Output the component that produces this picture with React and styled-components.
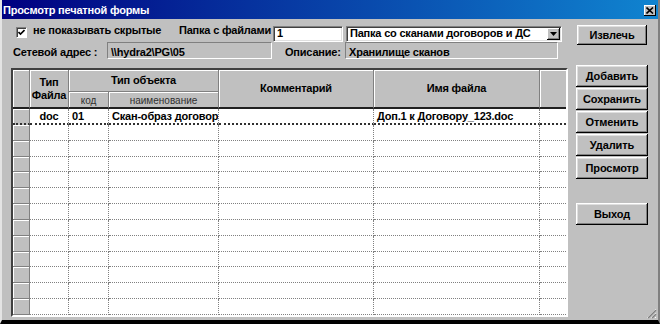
import React from "react";
import styled, { createGlobalStyle } from "styled-components";

const GlobalStyle = createGlobalStyle`
  html, body {
    margin: 0;
    padding: 0;
    background: #c0c0c0;
  }
  body {
    font-family: "Liberation Sans", Arial, sans-serif;
    font-size: 11px;
    font-weight: bold;
    letter-spacing: -0.2px;
    line-height: 13px;
    color: #000;
  }
`;

const Window = styled.div`
  position: relative;
  width: 660px;
  height: 324px;
  box-sizing: border-box;
  display: flex;
  flex-direction: column;
  overflow: hidden;
  background: #c0c0c0;
  border-left: 2px solid #e4e4e4;
  border-right: 2px solid #808080;
  border-bottom: 4px solid #000;
`;

const TitleBar = styled.div`
  flex: none;
  height: 19px;
  box-sizing: border-box;
  display: flex;
  align-items: center;
  justify-content: space-between;
  padding: 2px 2px 0 1px;
  background: linear-gradient(to right, #000080, #1084d0);
  color: #fff;
  font-size: 11px;
  font-weight: bold;
`;

const CloseButton = styled.div`
  width: 12px;
  height: 11px;
  display: flex;
  align-items: center;
  justify-content: center;
  background: #c0c0c0;
  box-shadow: inset -1px -1px #000, inset 1px 1px #fff;
`;

const Body = styled.div`
  flex: 1;
  display: flex;
  gap: 8px;
  padding-left: 9px;
`;

const LeftPane = styled.div`
  width: 557px;
  display: flex;
  flex-direction: column;
`;

const RightPane = styled.div`
  width: 72px;
  display: flex;
  flex-direction: column;
  padding-top: 6px;
`;

const FormRow = styled.div`
  display: flex;
  align-items: flex-start;
  height: ${(p) => p.$h}px;
  margin-top: ${(p) => p.$top || 0}px;
`;

const CheckArea = styled.label`
  width: 168px;
  box-sizing: border-box;
  padding-left: 5px;
  display: flex;
  align-items: flex-start;
  gap: 6px;
`;

const CheckBox = styled.span`
  width: 11px;
  height: 11px;
  margin-top: 3px;
  box-sizing: border-box;
  display: flex;
  align-items: center;
  justify-content: center;
  background: #fff;
  border: 1px solid;
  border-color: #808080 #fff #fff #808080;
  box-shadow: inset 1px 1px #404040;
`;

const Label = styled.span`
  width: ${(p) => p.$w}px;
  margin-left: ${(p) => p.$ml || 0}px;
  padding-left: ${(p) => p.$pl || 0}px;
  padding-top: ${(p) => p.$pt || 0}px;
  box-sizing: border-box;
  white-space: nowrap;
`;

const Field = styled.div`
  position: relative;
  width: ${(p) => p.$w}px;
  height: ${(p) => p.$h}px;
  margin-left: ${(p) => p.$ml || 0}px;
  margin-top: ${(p) => p.$mt || 0}px;
  box-sizing: border-box;
  padding: ${(p) => p.$pt || 0}px 0 0 3px;
  background: ${(p) => (p.$readOnly ? "#c0c0c0" : "#fff")};
  border: 1px solid;
  border-color: #808080 #fff #fff #808080;
  box-shadow: ${(p) =>
    p.$readOnly ? "none" : "inset 1px 1px #404040, inset -1px -1px #dfdfdf"};
  white-space: nowrap;
  overflow: hidden;
`;

const ComboArrow = styled.span`
  position: absolute;
  right: 1px;
  top: 1px;
  width: 13px;
  height: 12px;
  display: flex;
  align-items: center;
  justify-content: center;
  background: #c0c0c0;
  box-shadow: inset -1px -1px #000, inset 1px 1px #fff, inset -2px -2px #808080;
`;

const GridBox = styled.div`
  margin-top: 9px;
  width: 557px;
  height: 249px;
  box-sizing: border-box;
  border: 2px solid;
  border-color: #404040 #fff #fff #404040;
  background: #fff;
  overflow: hidden;
`;

const Sheet = styled.div`
  display: grid;
  grid-template-columns: 17px 39px 40px 110px 155px 166px 26px;
  grid-template-rows: 22px 17px 16px;
  grid-auto-rows: 15.83px;
`;

const HeadCell = styled.div`
  grid-column: span ${(p) => p.$span || 1};
  grid-row: span ${(p) => p.$rows || 1};
  box-sizing: border-box;
  display: flex;
  align-items: center;
  justify-content: center;
  text-align: center;
  background: #c0c0c0;
  box-shadow: inset 1px 1px #fff;
  border-right: ${(p) => (p.$last ? "none" : "1px solid #808080")};
  border-bottom: ${(p) => (p.$thick ? "2px solid #202020" : "1px solid #808080")};
  font-weight: ${(p) => (p.$sub ? "normal" : "bold")};
  font-size: ${(p) => (p.$sub ? 10 : 11)}px;
  letter-spacing: ${(p) => (p.$sub ? 0 : -0.2)}px;
  color: ${(p) => (p.$sub ? "#303030" : "#000")};
  padding-top: ${(p) => (p.$sub ? 1 : 0)}px;
`;

const MarkerCell = styled.div`
  box-sizing: border-box;
  background: #c0c0c0;
  box-shadow: inset 1px 1px #fff;
  border-right: 1px solid #808080;
  border-bottom: ${(p) => (p.$current ? "2px dotted #303030" : "1px solid #808080")};
`;

const Cell = styled.div`
  box-sizing: border-box;
  display: flex;
  align-items: center;
  justify-content: ${(p) => (p.$center ? "center" : "flex-start")};
  padding: 0 3px;
  white-space: nowrap;
  overflow: hidden;
  border-right: ${(p) => (p.$last ? "none" : "1px dotted #808080")};
  border-bottom: ${(p) => (p.$current ? "2px dotted #303030" : "1px dotted #808080")};
`;

const Button = styled.button`
  width: ${(p) => p.$w || 72}px;
  height: ${(p) => p.$h || 22}px;
  margin-left: ${(p) => p.$ml || 0}px;
  margin-top: ${(p) => p.$top || 0}px;
  padding: 0;
  border: none;
  background: #c0c0c0;
  box-shadow: inset -1px -1px #000, inset 1px 1px #fff, inset -2px -2px #808080,
    inset 2px 2px #dfdfdf;
  font-family: "Liberation Sans", Arial, sans-serif;
  font-size: 11px;
  font-weight: bold;
  letter-spacing: -0.1px;
  color: #000;
`;

const ButtonStack = styled.div`
  display: flex;
  flex-direction: column;
  gap: 1px;
  margin-top: 20px;
`;

const Grip = styled.svg`
  position: absolute;
  right: 1px;
  bottom: 1px;
`;

const rows = [
  { type: "doc", code: "01", name: "Скан-образ договор", comment: "", file: "Доп.1 к Договору_123.doc", current: true },
  ...Array.from({ length: 13 }, () => ({ type: "", code: "", name: "", comment: "", file: "" })),
];

export default function App() {
  return (
    <Window>
      <GlobalStyle />
      <TitleBar>
        <span>Просмотр печатной формы</span>
        <CloseButton>
          <svg width="8" height="7" viewBox="0 0 8 7">
            <path d="M0.5 0.5 L7 6.5 M7 0.5 L0.5 6.5" stroke="#000" strokeWidth="1.6" />
          </svg>
        </CloseButton>
      </TitleBar>
      <Body>
        <LeftPane>
          <FormRow $h={18} $top={5}>
            <CheckArea>
              <CheckBox>
                <svg width="7" height="7" viewBox="0 0 7 7">
                  <polyline points="0.5,3 2.5,5 6.5,1" fill="none" stroke="#000" strokeWidth="1.6" />
                </svg>
              </CheckBox>
              <span>не показывать скрытые</span>
            </CheckArea>
            <Label $w={94}>Папка с файлами</Label>
            <Field $w={70} $h={16} $mt={2}>1</Field>
            <Field $w={216} $h={16} $mt={2} $ml={3}>
              Папка со сканами договоров и ДС
              <ComboArrow>
                <svg width="7" height="4" viewBox="0 0 7 4">
                  <path d="M0 0 H7 L3.5 4 Z" fill="#000" />
                </svg>
              </ComboArrow>
            </Field>
          </FormRow>
          <FormRow $h={17}>
            <Label $w={96} $pl={2} $pt={4}>Сетевой адрес :</Label>
            <Field $w={165} $h={17} $pt={3} $readOnly>{"\\\\hydra2\\PG\\05"}</Field>
            <Label $w={60} $ml={13} $pt={4}>Описание:</Label>
            <Field $w={213} $h={17} $pt={3} $readOnly>Хранилище сканов</Field>
          </FormRow>
          <GridBox>
            <Sheet>
              <HeadCell $rows={2} $thick />
              <HeadCell $rows={2} $thick>
                Тип
                <br />
                Файла
              </HeadCell>
              <HeadCell $span={2}>Тип объекта</HeadCell>
              <HeadCell $rows={2} $thick>Комментарий</HeadCell>
              <HeadCell $rows={2} $thick>Имя файла</HeadCell>
              <HeadCell $rows={2} $thick $last />
              <HeadCell $sub $thick>код</HeadCell>
              <HeadCell $sub $thick>наименование</HeadCell>
              {rows.map((r, i) => (
                <React.Fragment key={i}>
                  <MarkerCell $current={r.current} />
                  <Cell $current={r.current} $center>{r.type}</Cell>
                  <Cell $current={r.current}>{r.code}</Cell>
                  <Cell $current={r.current}>{r.name}</Cell>
                  <Cell $current={r.current}>{r.comment}</Cell>
                  <Cell $current={r.current}>{r.file}</Cell>
                  <Cell $current={r.current} $last />
                </React.Fragment>
              ))}
            </Sheet>
          </GridBox>
        </LeftPane>
        <RightPane>
          <Button $w={70} $h={20} $ml={1}>Извлечь</Button>
          <ButtonStack>
            <Button>Добавить</Button>
            <Button>Сохранить</Button>
            <Button>Отменить</Button>
            <Button>Удалить</Button>
            <Button>Просмотр</Button>
          </ButtonStack>
          <Button $top={24}>Выход</Button>
        </RightPane>
      </Body>
      <Grip width="12" height="12" viewBox="0 0 12 12">
        <path d="M11 2 L2 11 M11 6 L6 11 M11 10 L10 11" stroke="#fff" strokeWidth="1" />
        <path d="M11 3 L3 11 M11 7 L7 11" stroke="#808080" strokeWidth="1.5" />
      </Grip>
    </Window>
  );
}
